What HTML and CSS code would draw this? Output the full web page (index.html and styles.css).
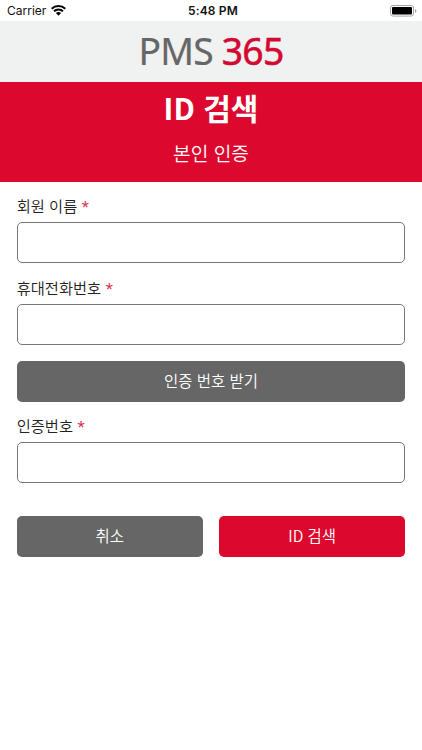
FILE: index.html
```html
<!DOCTYPE html>
<html lang="ko">
<head>
<meta charset="utf-8">
<title>PMS 365</title>
<link rel="stylesheet" href="styles.css">
</head>
<body>
<header class="status">
  <div class="carrier"><span>Carrier</span>
    <svg class="wifi" viewBox="0 0 15 11" width="15" height="11"><path d="M.7 3.8a9.8 9.8 0 0 1 13.6 0M3 6.3a6.4 6.4 0 0 1 9 0" fill="none" stroke="#000" stroke-width="1.9"/><path d="M4.9 8.1a3.8 3.8 0 0 1 5.2 0L7.5 10.8z"/></svg>
  </div>
  <div class="clock">5:48 PM</div>
  <svg class="battery" viewBox="0 0 27 12" width="27" height="12"><rect x=".5" y=".5" width="23" height="10.6" rx="2.5" fill="none" stroke="#a5a5a5"/><rect x="2" y="2" width="20" height="7.6" rx="1"/><path d="M25 4v4q1.4-.6 1.4-2T25 4z" fill="#a5a5a5"/></svg>
</header>
<div class="brand"><div class="logo"><span>PMS</span> <b>365</b></div></div>
<section class="hero"><h1>ID 검색</h1><p>본인 인증</p></section>
<main class="form">
  <label for="name">회원 이름 <i>*</i></label><input id="name">
  <label for="phone">휴대전화번호 <i>*</i></label><input id="phone">
  <button class="send">인증 번호 받기</button>
  <label for="code">인증번호 <i>*</i></label><input id="code">
  <div class="actions"><button>취소</button><button class="primary">ID 검색</button></div>
</main>
</body>
</html>
```
FILE: styles.css
```css
* { box-sizing: border-box; }
body { margin: 0; background: #fff; color: #222; font-family: "Noto Sans CJK KR", sans-serif; }
.status { height: 21px; padding: 0 5px 0 7px; display: grid; grid-template-columns: 1fr auto 1fr; align-items: center; background: #fff; color: #111; font: 12px/21px Inter, sans-serif; }
.carrier { display: flex; align-items: center; gap: 5px; }
.clock { font-weight: 600; letter-spacing: .15px; padding-left: 2px; }
.battery { justify-self: end; }
.brand { height: 61px; background: #f0f1f1; display: flex; align-items: center; justify-content: center; }
.logo { padding-bottom: 3px; font: 39px/58px "Noto Sans", sans-serif; color: #666; letter-spacing: -.8px; transform: scaleX(.955); -webkit-text-stroke: .2px currentColor; }
.logo b { color: #d20a32; font-weight: 400; -webkit-text-stroke: .6px currentColor; }
.hero { height: 99.5px; background: #dc082d; color: #fff; text-align: center; }
.hero h1 { margin: 0; padding-top: 3px; font-size: 30px; line-height: 44px; font-weight: 700; }
.hero p { margin: 0; font-size: 19.2px; line-height: 49px; font-weight: 350; }
.form { padding: 12.9px 16.7px; display: flex; flex-direction: column; }
label { height: 28px; font-size: 15.3px; line-height: 22px; font-weight: 350; white-space: nowrap; }
label i { color: #dc082d; font-style: normal; font-family: "Noto Sans", sans-serif; font-size: 14px; line-height: 1; -webkit-text-stroke: .2px currentColor; }
input { width: 100%; height: 41px; margin: 0 0 12.3px; border: 1px solid #777; border-radius: 5px; background: #fff; }
button { height: 41px; padding: 0 0 2px; border: 0; border-radius: 5px; background: #666; color: #fff; font: 350 15.5px/39px "Noto Sans CJK KR", sans-serif; }
.send { margin: 4px 0 12.3px; }
.actions { display: grid; grid-template-columns: 1fr 1fr; gap: 16px; margin-top: 20px; }
.actions .primary { background: #dc082d; }
```
